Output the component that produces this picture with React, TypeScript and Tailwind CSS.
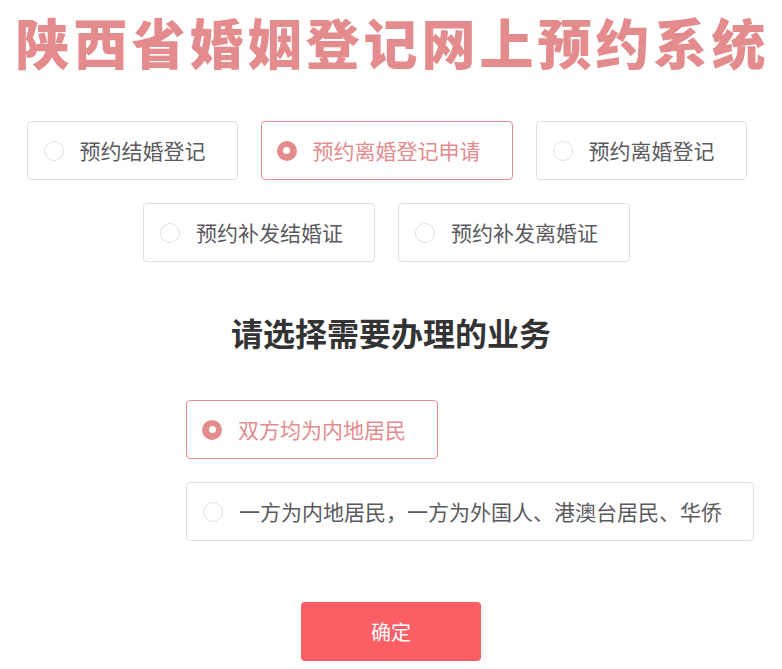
import React from "react";

function Radio({ checked }: { checked: boolean }) {
  if (checked) {
    return (
      <span className="flex h-[20px] w-[20px] shrink-0 items-center justify-center rounded-full bg-[#e48b8d]">
        <span className="block h-[7px] w-[7px] rounded-full bg-white" />
      </span>
    );
  }
  return <span className="block h-[20px] w-[20px] shrink-0 rounded-full border border-[#dcdfe6] bg-white" />;
}

function Option({ label, checked = false }: { label: string; checked?: boolean }) {
  return (
    <div
      className={
        checked
          ? "flex h-[59px] items-center gap-[16px] rounded-[4px] border border-[#e48b8d] bg-white pl-[15px] pr-[31px] text-[21px] text-[#e48b8d]"
          : "flex h-[59px] items-center gap-[16px] rounded-[4px] border border-[#dcdfe6] bg-white pl-[16px] pr-[31px] text-[21px] text-[#5a5a5e]"
      }
    >
      <Radio checked={checked} />
      <span className="whitespace-nowrap leading-none">{label}</span>
    </div>
  );
}

export default function App() {
  return (
    <div
      className="h-[669px] w-[782px] overflow-hidden bg-white"
      style={{ fontFamily: '"Noto Sans CJK SC", "Noto Sans", sans-serif' }}
    >
      <h1 className="pl-[3px] pt-[15px] text-center text-[54px] font-black leading-[54px] tracking-[4px] text-[#e48b8d]">
        陕西省婚姻登记网上预约系统
      </h1>
      <div className="mt-[52px] flex flex-col items-center gap-[23px] pr-[9px]">
        <div className="flex gap-[23px]">
          <Option label="预约结婚登记" />
          <Option label="预约离婚登记申请" checked />
          <Option label="预约离婚登记" />
        </div>
        <div className="flex gap-[23px]">
          <Option label="预约补发结婚证" />
          <Option label="预约补发离婚证" />
        </div>
      </div>
      <h2 className="mt-[54px] text-center text-[32px] font-bold leading-[32px] text-[#333333]">
        请选择需要办理的业务
      </h2>
      <div className="mt-[52px] flex flex-col items-start gap-[23px] pl-[186px]">
        <Option label="双方均为内地居民" checked />
        <Option label="一方为内地居民，一方为外国人、港澳台居民、华侨" />
      </div>
      <div className="mt-[61px] flex justify-center">
        <button className="flex h-[59px] w-[180px] items-center justify-center rounded-[4px] bg-[#fc5e66] text-[20px] text-white">
          确定
        </button>
      </div>
    </div>
  );
}
